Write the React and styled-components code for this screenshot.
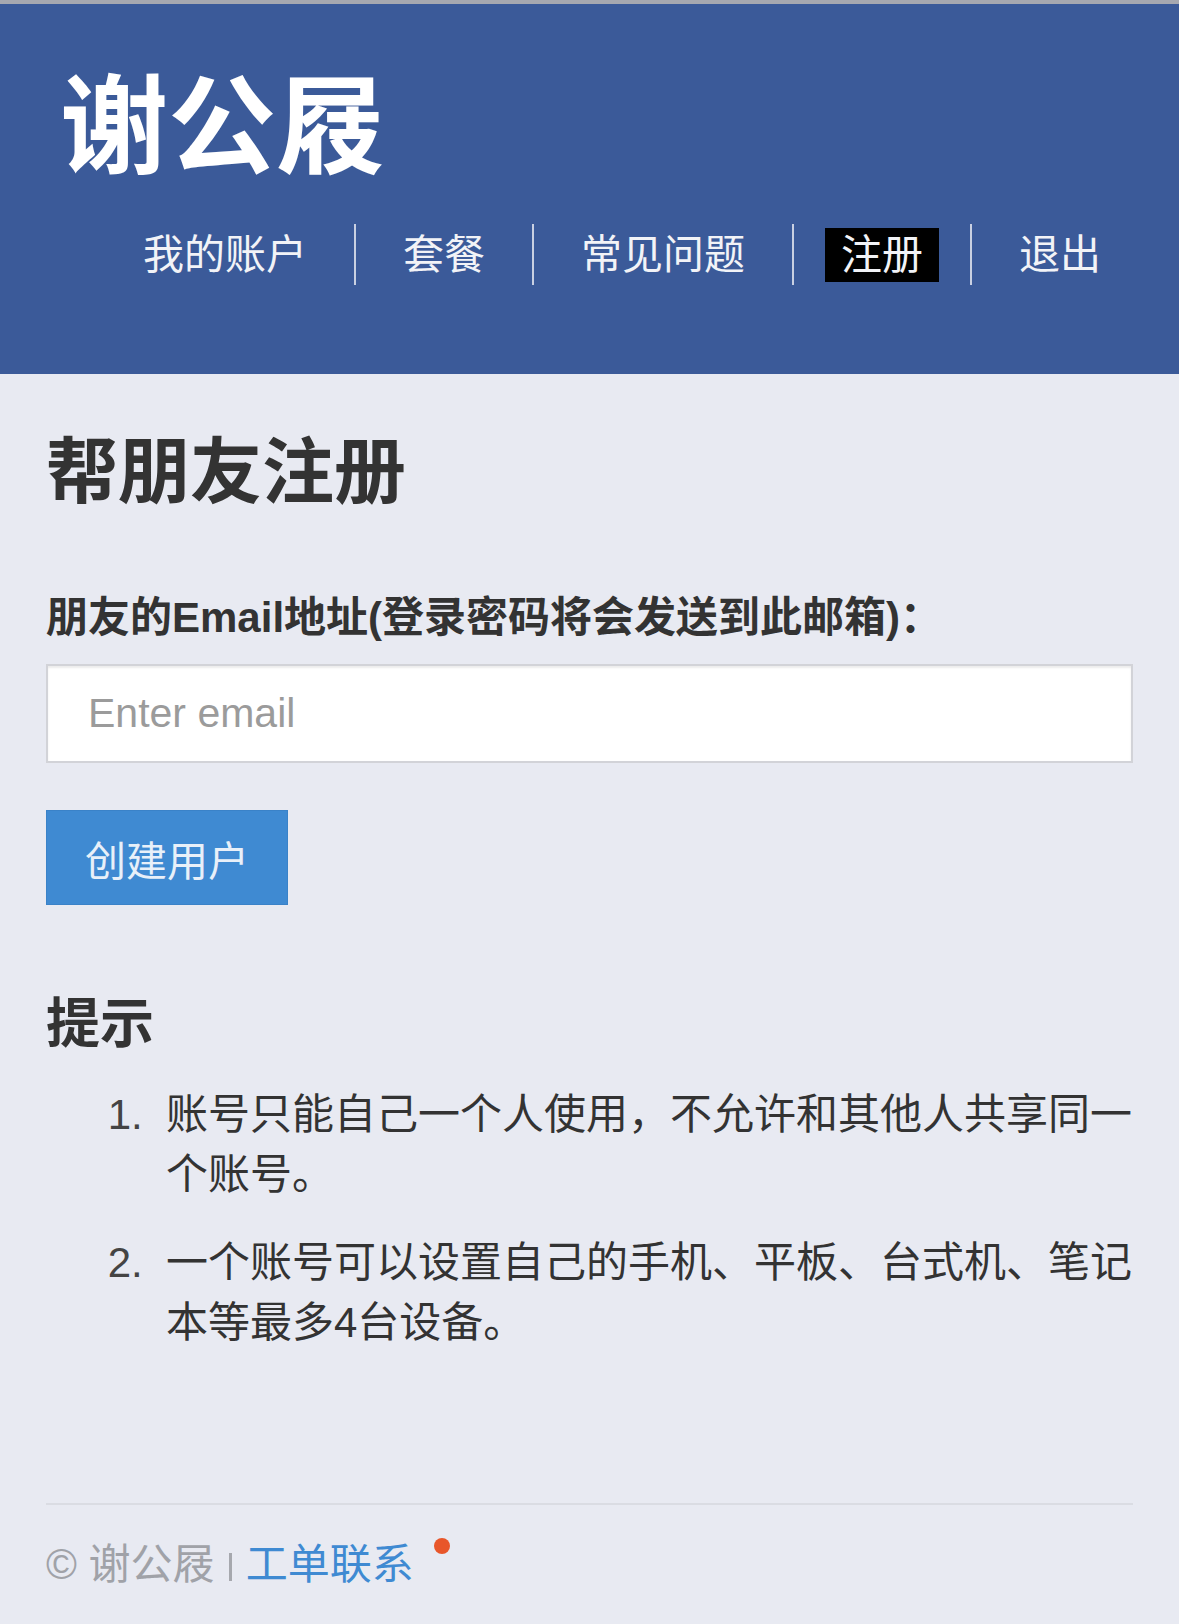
import styled, { createGlobalStyle } from 'styled-components'

const GlobalStyle = createGlobalStyle`
    html, body {
        margin: 0;
        padding: 0;
        background: #e8eaf2;
    }
    body {
        font-family: "Liberation Sans", "Noto Sans CJK SC", sans-serif;
        color: #333;
    }
    * { box-sizing: border-box; }
`

const navItems = [
    { label: '我的账户' },
    { label: '套餐' },
    { label: '常见问题' },
    { label: '注册', active: true },
    { label: '退出' },
]

const tips = [
    '账号只能自己一个人使用，不允许和其他人共享同一个账号。',
    '一个账号可以设置自己的手机、平板、台式机、笔记本等最多4台设备。',
]

export default function App() {
    return (
        <>
            <GlobalStyle />
            <Page>
                <Header>
                    <Brand>谢公屐</Brand>
                    <Nav>
                        {navItems.map((item, i) => (
                            <NavGroup key={item.label}>
                                {i > 0 && <Sep />}
                                <NavLink href="#" $active={item.active}>{item.label}</NavLink>
                            </NavGroup>
                        ))}
                    </Nav>
                </Header>

                <Main>
                    <Title>帮朋友注册</Title>
                    <Form onSubmit={(e) => e.preventDefault()}>
                        <Label htmlFor="email">朋友的Email地址(登录密码将会发送到此邮箱)：</Label>
                        <Input id="email" type="email" placeholder="Enter email" />
                        <Submit type="submit">创建用户</Submit>
                    </Form>

                    <SubTitle>提示</SubTitle>
                    <Tips>
                        {tips.map((t) => <Tip key={t}>{t}</Tip>)}
                    </Tips>
                </Main>

                <Footer>
                    <Copy>© 谢公屐</Copy>
                    <Bar />
                    <Ticket href="#">
                        工单联系
                        <Dot />
                    </Ticket>
                </Footer>
            </Page>
        </>
    )
}

//-----styled-components------

const Page = styled.div`
    min-height: 1624px;
    display: flex;
    flex-direction: column;
`
const Header = styled.header`
    background: #3b5a99;
    border-top: 4px solid #a6a8b0;
    padding: 60px 62px 89px 60px;
`
const Brand = styled.h1`
    margin: 0;
    font-size: 108px;
    line-height: 1;
    font-weight: 700;
    color: #fff;
    font-family: "Noto Sans CJK SC", sans-serif;
`
const Nav = styled.nav`
    margin-top: 52px;
    display: flex;
    justify-content: flex-end;
    align-items: center;
`
const NavGroup = styled.div`
    display: flex;
    align-items: center;
`
const Sep = styled.span`
    width: 2px;
    height: 61px;
    margin: 0 31px;
    background: #c9d0e2;
`
const NavLink = styled.a`
    display: block;
    padding: 6px 16px;
    font-size: 41px;
    line-height: 42px;
    color: #f2f3f7;
    text-decoration: none;
    background: ${(p) => (p.$active ? '#000' : 'transparent')};
`
const Main = styled.main`
    padding: 62px 46px 0 46px;
`
const Title = styled.h2`
    margin: 0;
    font-size: 72px;
    line-height: 1;
    font-weight: 700;
    color: #333;
`
const Form = styled.form`
    margin-top: 89px;
    display: flex;
    flex-direction: column;
    align-items: flex-start;
`
const Label = styled.label`
    font-size: 42px;
    line-height: 42px;
    font-weight: 700;
    color: #333;
`
const Input = styled.input`
    margin-top: 25px;
    width: 100%;
    height: 99px;
    padding: 0 40px;
    font-family: "Liberation Sans", sans-serif;
    font-size: 41px;
    color: #333;
    background: #fff;
    border: 2px solid #d2d3d8;
    box-shadow: inset 0 2px 2px rgba(0, 0, 0, 0.08);
    outline: none;
    &::placeholder {
        color: #9b9b9b;
    }
`
const Submit = styled.button`
    margin-top: 47px;
    height: 95px;
    padding: 0 38px;
    font-family: "Noto Sans CJK SC", sans-serif;
    font-size: 41px;
    color: #e8f0f9;
    background: #3f8ad2;
    border: 1px solid #3a82c8;
    border-radius: 0;
`
const SubTitle = styled.h3`
    margin: 92px 0 0 0;
    font-size: 54px;
    line-height: 1;
    font-weight: 700;
    color: #333;
`
const Tips = styled.ol`
    margin: 34px -6px 0 0;
    padding-left: 120px;
`
const Tip = styled.li`
    font-size: 42px;
    line-height: 60px;
    color: #333;
    & + & {
        margin-top: 28px;
    }
    &::marker {
        content: counter(list-item) ".\\00a0\\00a0";
        font-family: "Liberation Sans", sans-serif;
        color: #444;
    }
`
const Footer = styled.footer`
    margin: auto 46px 0 46px;
    border-top: 2px solid #dadce3;
    padding: 39px 0 38px 0;
    display: flex;
    align-items: center;
    font-size: 42px;
    line-height: 42px;
`
const Copy = styled.span`
    color: #a0a2a8;
`
const Bar = styled.span`
    width: 3px;
    height: 28px;
    margin: 4px 14px 0 14px;
    background: #a6a8ae;
`
const Ticket = styled.a`
    position: relative;
    color: #3f8ad2;
    text-decoration: none;
`
const Dot = styled.span`
    position: absolute;
    top: -6px;
    right: -36px;
    width: 16px;
    height: 16px;
    border-radius: 50%;
    background: #e8562a;
`
